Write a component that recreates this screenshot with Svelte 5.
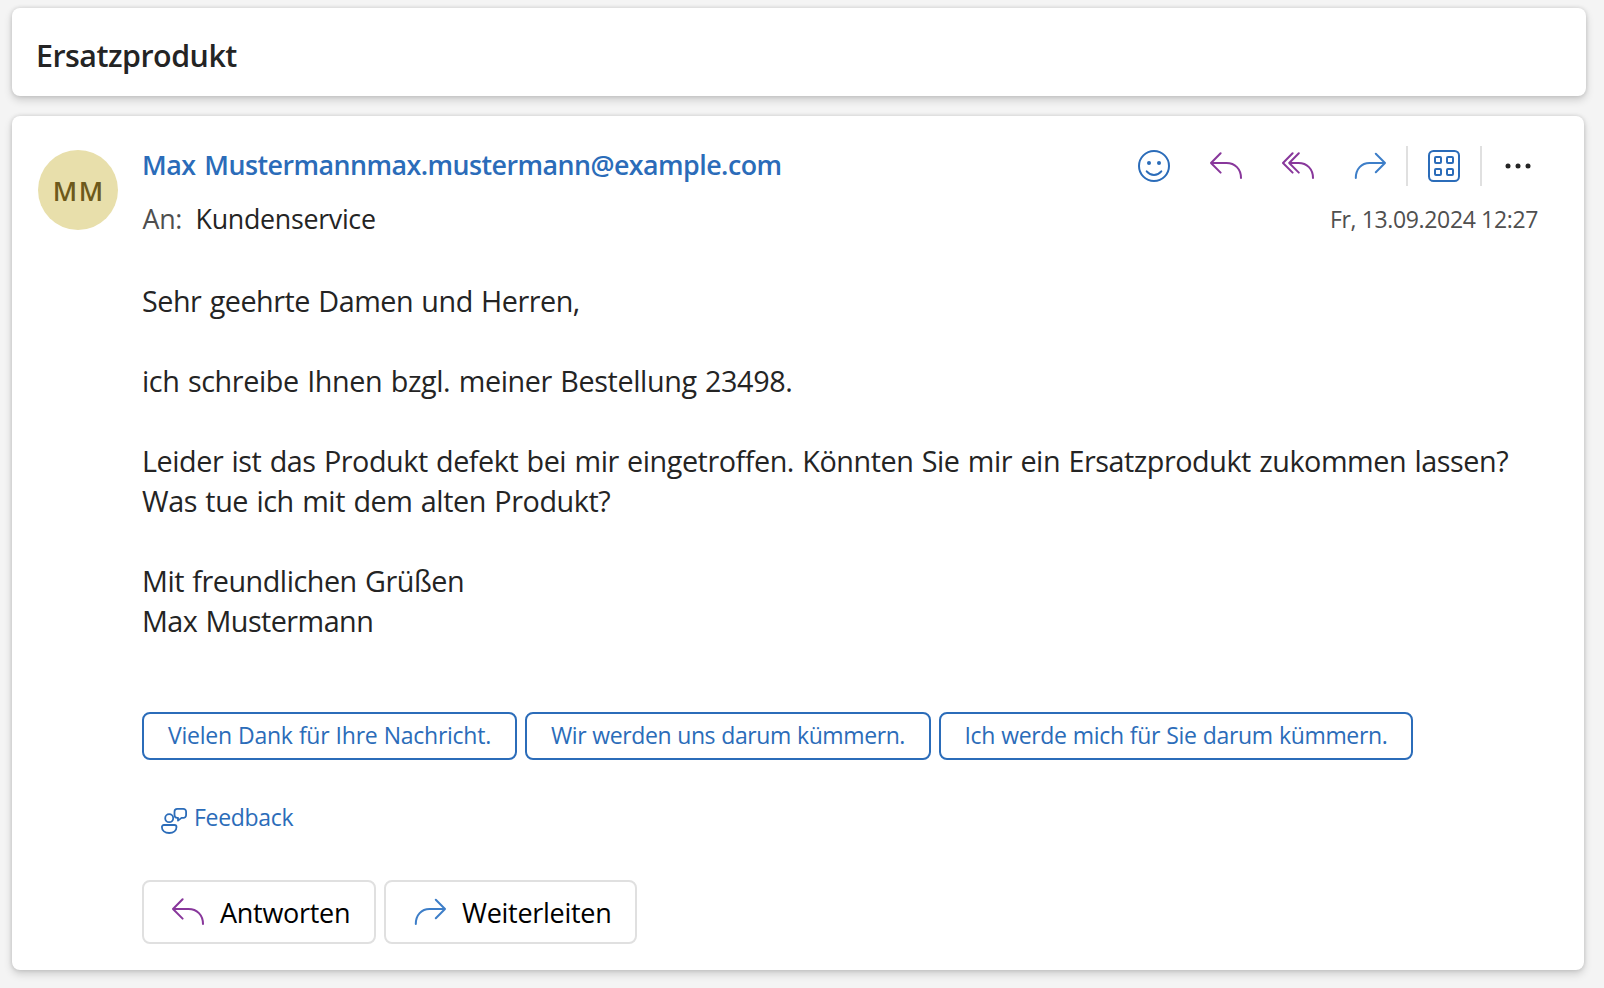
<script>
  const lines = [
    { text: 'Sehr geehrte Damen und Herren,', track: -0.48 },
    { text: '' },
    { text: 'ich schreibe Ihnen bzgl. meiner Bestellung 23498.', track: -0.385 },
    { text: '' },
    { text: 'Leider ist das Produkt defekt bei mir eingetroffen. Könnten Sie mir ein Ersatzprodukt zukommen lassen?', track: -0.45 },
    { text: 'Was tue ich mit dem alten Produkt?', track: -0.42 },
    { text: '' },
    { text: 'Mit freundlichen Grüßen', track: -0.47 },
    { text: 'Max Mustermann', track: -0.54 }
  ];
  const suggestions = [
    { text: 'Vielen Dank für Ihre Nachricht.', width: 375, track: -0.25 },
    { text: 'Wir werden uns darum kümmern.', width: 406, track: -0.4 },
    { text: 'Ich werde mich für Sie darum kümmern.', width: 474, track: -0.33 }
  ];
</script>

{#snippet reply()}
  <svg class="icon purple" viewBox="0 0 32 32">
    <path d="M10.6 3.2 1 13l9.6 9.6M1 13h15.5C25 13 31 19 31 28" />
  </svg>
{/snippet}

{#snippet forward()}
  <svg class="icon sky" viewBox="0 0 32 32">
    <path d="M21.8 3.8 31 13l-9.2 9.2M31 13H15.5C7.5 13 1.8 19 1.8 28" />
  </svg>
{/snippet}

<main>
  <section class="card subject">
    <h1>Ersatzprodukt</h1>
  </section>

  <article class="card mail">
    <div class="avatar"><span>MM</span></div>

    <div class="content">
      <header>
        <div class="who">
          <div class="sender">Max Mustermannmax.mustermann@example.com</div>
          <div class="to"><span class="label">An:</span><span class="name">Kundenservice</span></div>
        </div>
        <div class="side">
          <div class="actions">
            <svg class="icon blue" viewBox="0 0 32 32">
              <circle cx="16" cy="16" r="15" />
              <path d="M8.7 21.3c4.2 4.9 10.4 4.9 14.6 0" />
              <circle class="dot" cx="11" cy="13" r="2" />
              <circle class="dot" cx="21" cy="13" r="2" />
            </svg>
            {@render reply()}
            <svg class="icon purple" viewBox="0 0 32 32">
              <path d="M10.6 3.2 1 13l9.6 9.6M16.8 3.2 7.2 13l9.6 9.6M7.2 13h9.3C25 13 31 19 31 28" />
            </svg>
            {@render forward()}
            <i class="sep"></i>
            <svg class="icon blue" viewBox="0 0 32 32">
              <rect x="1" y="1" width="30" height="30" rx="4.5" />
              <rect x="7" y="7" width="6" height="6" rx="1" />
              <rect x="19" y="7" width="6" height="6" rx="1" />
              <rect x="7" y="19" width="6" height="6" rx="1" />
              <rect x="19" y="19" width="6" height="6" rx="1" />
            </svg>
            <i class="sep"></i>
            <svg class="icon" viewBox="0 0 32 32">
              <circle class="more" cx="6" cy="16" r="2.5" />
              <circle class="more" cx="16" cy="16" r="2.5" />
              <circle class="more" cx="26" cy="16" r="2.5" />
            </svg>
          </div>
          <time>Fr, 13.09.2024 12:27</time>
        </div>
      </header>

      <div class="body">
        {#each lines as line}
          <p style:letter-spacing="{line.track ?? 0}px">{line.text}</p>
        {/each}
      </div>

      <div class="chips">
        {#each suggestions as s}
          <button class="chip" style:width="{s.width}px" style:letter-spacing="{s.track}px">{s.text}</button>
        {/each}
      </div>

      <div class="feedback">
        <svg viewBox="0 0 26 26">
          <circle cx="8.2" cy="10.2" r="4" />
          <path d="M2.9 17h10.6a2 2 0 0 1 2 2c0 3.6-3 6-7.3 6S.9 22.6.9 19a2 2 0 0 1 2-2z" />
          <path d="M16.3.9h6a2.8 2.8 0 0 1 2.8 2.8v3.4a2.8 2.8 0 0 1-2.8 2.8h-1.8L17 12.6V9.8h-.7a2.8 2.8 0 0 1-2.8-2.8V3.7A2.8 2.8 0 0 1 16.3.9z" />
        </svg>
        <span>Feedback</span>
      </div>

      <div class="buttons">
        <button class="answer">{@render reply()}<span>Antworten</span></button>
        <button class="forward">{@render forward()}<span>Weiterleiten</span></button>
      </div>
    </div>
  </article>
</main>

<style>
  :global(body) {
    background: #f4f4f4;
  }
  main {
    box-sizing: border-box;
    width: 1604px;
    height: 988px;
    padding: 8px 18px 18px 12px;
    display: flex;
    flex-direction: column;
    gap: 20px;
    overflow: hidden;
    font-family: 'Open Sans', 'Noto Sans', sans-serif;
    color: #242424;
  }
  .card {
    box-sizing: border-box;
    background: #fff;
    border-radius: 8px;
    box-shadow: 0 0 4px rgba(0, 0, 0, 0.14), 0 4px 8px rgba(0, 0, 0, 0.16);
  }
  .subject {
    height: 88px;
    flex: none;
    padding: 26px 24px;
  }
  h1 {
    margin: 0;
    font-size: 30.4px;
    line-height: 44px;
    font-weight: 600;
    letter-spacing: -0.5px;
  }
  .mail {
    flex: 1;
    margin-right: 2px;
    padding: 29px 46px 0 26px;
    display: flex;
    gap: 24px;
  }
  .avatar {
    flex: none;
    width: 80px;
    height: 80px;
    margin-top: 5px;
    border-radius: 50%;
    background: #e8dfab;
    color: #6d591b;
    display: flex;
    align-items: center;
    justify-content: center;
    font-size: 26.5px;
    font-weight: 600;
    line-height: 80px;
    letter-spacing: 1.5px;
  }
  .avatar span {
    padding: 1px 0 0 1.5px;
  }
  .content {
    flex: 1;
    min-width: 0;
    display: flex;
    flex-direction: column;
  }
  header {
    display: flex;
    justify-content: space-between;
    height: 93px;
  }
  .who {
    display: flex;
    flex-direction: column;
    gap: 14px;
    line-height: 40px;
    font-size: 26.8px;
  }
  .sender {
    color: #2b6cb9;
    font-weight: 600;
    letter-spacing: -0.54px;
    word-spacing: 2.5px;
  }
  .to {
    display: flex;
    gap: 12px;
    letter-spacing: -0.3px;
  }
  .label {
    color: #4f4f4f;
    width: 41px;
    padding-left: 0.6px;
  }
  .side {
    display: flex;
    flex-direction: column;
    align-items: flex-end;
    gap: 13px;
    padding-top: 1px;
  }
  .actions {
    display: flex;
    align-items: center;
    height: 40px;
    gap: 20px;
    margin-right: 4px;
  }
  .icon {
    width: 32px;
    height: 32px;
    flex: none;
    fill: none;
    stroke-width: 2;
    stroke-linejoin: round;
    stroke-linecap: round;
  }
  .actions .icon:nth-child(-n + 3) {
    margin-right: 20px;
  }
  .blue {
    stroke: #2b6cb9;
  }
  .sky {
    stroke: #3d7ec8;
  }
  .purple {
    stroke: #88379b;
  }
  .dot {
    fill: #2b6cb9;
    stroke: none;
  }
  .more {
    fill: #242424;
  }
  .sep {
    width: 2px;
    height: 40px;
    background: #e0e0e0;
  }
  time {
    color: #4f4f4f;
    font-size: 23px;
    line-height: 40px;
    letter-spacing: -0.35px;
  }
  .body {
    margin-top: 43px;
    font-size: 28.75px;
    line-height: 40px;
    word-spacing: 1.3px;
  }
  p {
    margin: 0;
    height: 40px;
    white-space: nowrap;
  }
  .chips {
    display: flex;
    gap: 8px;
    margin-top: 71px;
  }
  button {
    box-sizing: border-box;
    margin: 0;
    font-family: inherit;
    background: #fff;
    white-space: nowrap;
  }
  .chip {
    height: 48px;
    padding: 0 0 2px;
    border: 2px solid #2b6cb9;
    border-radius: 8px;
    color: #2b6cb9;
    font-size: 23px;
    line-height: 42px;
    word-spacing: 0.5px;
  }
  .feedback {
    display: flex;
    align-items: center;
    gap: 7px;
    height: 40px;
    margin: 37px 0 0 19px;
    color: #2b6cb9;
    font-size: 23px;
    letter-spacing: -0.3px;
  }
  .feedback svg {
    width: 26px;
    height: 26px;
    margin-top: 8px;
    fill: none;
    stroke: #2b6cb9;
    stroke-width: 1.8;
    stroke-linejoin: round;
  }
  .buttons {
    display: flex;
    gap: 8px;
    margin-top: 43px;
  }
  .buttons button {
    display: flex;
    align-items: center;
    height: 64px;
    padding: 0 0 0 28px;
    gap: 16px;
    border: 2px solid #e0e0e0;
    border-radius: 8px;
    color: #000;
    font-size: 27px;
    letter-spacing: -0.28px;
  }
  .buttons .answer {
    width: 234px;
  }
  .buttons .forward {
    width: 253px;
  }
</style>
